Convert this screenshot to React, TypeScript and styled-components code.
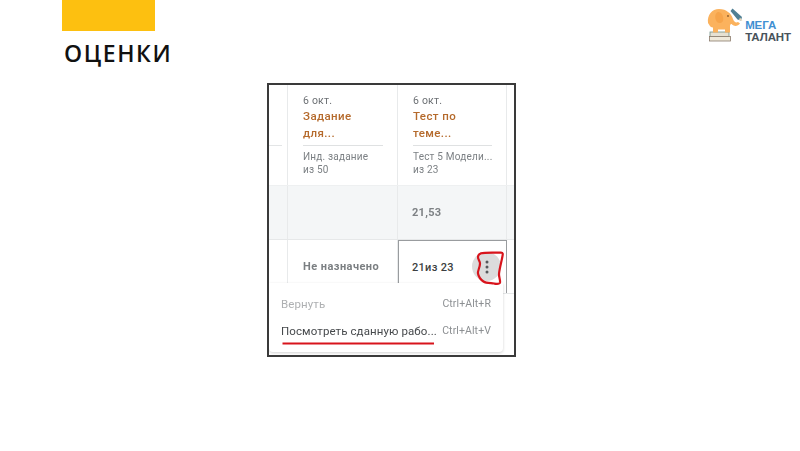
import React from "react"
import styled, {createGlobalStyle} from "styled-components"

const GlobalStyle = createGlobalStyle`
  html, body {
    margin: 0;
    padding: 0;
    background: #ffffff;
  }
  body {
    font-family: "Roboto", "Liberation Sans", sans-serif;
  }
`

const Page = styled.div`
  width: 800px;
  height: 451px;
  overflow: hidden;
  background: #ffffff;
  display: flex;
  flex-direction: column;
`

const Header = styled.header`
  height: 83px;
  flex: none;
  display: flex;
  justify-content: space-between;
  align-items: flex-start;
  padding: 0 9px 0 62px;
`

const TitleBlock = styled.div`
  display: flex;
  flex-direction: column;
`

const YellowBar = styled.div`
  width: 93px;
  height: 31px;
  background: #fdc010;
`

const Title = styled.h1`
  margin: 9px 0 0 2px;
  font-family: "Open Sans", "Liberation Sans", sans-serif;
  font-size: 23px;
  line-height: 26px;
  font-weight: 600;
  letter-spacing: 1.6px;
  color: #111111;
`

const LogoBox = styled.div`
  display: flex;
  align-items: flex-start;
  gap: 1px;
  margin-top: 8px;
`

const LogoText = styled.div`
  display: flex;
  flex-direction: column;
  margin-top: 11px;
  font-family: "Liberation Sans", sans-serif;
  font-size: 11.5px;
  line-height: 12px;
  font-weight: 700;
  letter-spacing: -0.1px;
`

const LogoWord = styled.span<{$color: string}>`
  color: ${p => p.$color};
`

const Shot = styled.figure`
  position: relative;
  margin: 0 0 0 267px;
  width: 249px;
  height: 274px;
  box-sizing: border-box;
  border: 2px solid #3a3a3a;
  overflow: hidden;
  background: #ffffff;
`

const Blurred = styled.div`
  height: 100%;
  filter: blur(0.4px);
`

const HeadRow = styled.div`
  height: 100px;
  display: grid;
  grid-template-columns: 19px 110px 109px 1fr;
  border-bottom: 1px solid #eef0f1;
`

const DataRow = styled.div<{$bg: string; $h: number}>`
  height: ${p => p.$h}px;
  display: grid;
  grid-template-columns: 19px 110px 109px 1fr;
  background: ${p => p.$bg};
  border-bottom: 1px solid #e6e8e9;
`

const Cell = styled.div<{$last?: boolean}>`
  box-sizing: border-box;
  border-right: ${p => (p.$last ? "none" : "1px solid #e8eaeb")};
  min-width: 0;
`

const EdgeCell = styled(Cell)`
  position: relative;
  &::after {
    content: "";
    position: absolute;
    left: 0;
    right: 5px;
    top: 60px;
    border-top: 1px solid #e3e5e6;
  }
`

const ColumnHead = styled(Cell)`
  padding: 10px 14px 0 15px;
`

const DateText = styled.div`
  font-size: 10.5px;
  line-height: 12px;
  letter-spacing: 0.2px;
  color: #6c7074;
`

const TaskName = styled.div`
  margin-top: 1px;
  font-size: 11.5px;
  line-height: 17px;
  font-weight: 500;
  letter-spacing: 0.4px;
  color: #b56a2c;
  padding-bottom: 3px;
  border-bottom: 1px solid #dfe1e2;
`

const TaskMeta = styled.div`
  margin-top: 4px;
  font-size: 10px;
  line-height: 13px;
  letter-spacing: 0.2px;
  color: #7c8084;
  white-space: nowrap;
`

const ValueCell = styled(Cell)`
  display: flex;
  align-items: center;
  padding-left: 14px;
  font-size: 11px;
  font-weight: 700;
  letter-spacing: 0.3px;
  color: #7d8184;
`

const UnsetCell = styled(ValueCell)`
  padding-left: 15px;
  letter-spacing: 0.45px;
  color: #7b7f82;
`

const SelectedCell = styled(ValueCell)`
  position: relative;
  padding-left: 13px;
  background: #ffffff;
  border: 1px solid #999c9f;
  border-bottom: none;
  justify-content: flex-start;
  color: #3c3f42;
  font-weight: 500;
`

const MoreButton = styled.div`
  position: absolute;
  right: 5px;
  top: 11px;
  width: 29px;
  height: 29px;
  border-radius: 50%;
  background: #dcdcdc;
  display: flex;
  align-items: center;
  justify-content: center;
  color: #55585b;
`

const Menu = styled.div`
  position: absolute;
  left: 0;
  top: 198px;
  width: 234px;
  height: 69px;
  box-sizing: border-box;
  padding: 7px 12px 0 12px;
  background: #ffffff;
  border-radius: 0 0 4px 4px;
  box-shadow: 0 1px 3px rgba(0, 0, 0, 0.18);
  display: flex;
  flex-direction: column;
`

const MenuRow = styled.div`
  height: 27px;
  display: flex;
  align-items: center;
  justify-content: space-between;
  white-space: nowrap;
`

const MenuLabel = styled.span<{$muted?: boolean}>`
  font-size: 11.5px;
  letter-spacing: 0.1px;
  color: ${p => (p.$muted ? "#aeb0b2" : "#46494c")};
`

const MenuKeys = styled.span`
  font-size: 10.5px;
  letter-spacing: 0.1px;
  color: #8d9093;
`

const MarkLayer = styled.svg`
  position: absolute;
  left: 0;
  top: 0;
  width: 100%;
  height: 100%;
  pointer-events: none;
`

function Logo(){
  return(
    <LogoBox>
      <svg width="37" height="34" viewBox="0 0 37 34">
        <rect x="3" y="24" width="19" height="4.500" fill="#e6e1d2" stroke="#6f8f86" strokeWidth="0.8"/>
        <rect x="2.500" y="28.500" width="21" height="4.500" fill="#efe9da" stroke="#8a7a6c" strokeWidth="0.8"/>
        <path d="M1 15C0 7 5 1 12 1c4 0 7 1 9 3 2 1 4 4 5 7 1 3 3 4 5 3l2 1.500c-2 3-6 3-8 1-1-1-2 0-2 2v6h-5v-3h-7v3H6v-5c-2 0-3-1-4-3z" fill="#fbb25d"/>
        <path d="M11 4c-3 1-4 6-1 10 2 2 5 1 6-1 1-4-1-9-5-9z" fill="#f6a44a"/>
        <circle cx="21" cy="8" r="0.900" fill="#8a5a2b"/>
        <path d="M23.500 3l2-2.500 9.500 8.500-1 3.500-3.500-1z" fill="#4f7f94"/>
        <path d="M33 9.500l2.500 3.500-3.500-1z" fill="#e9d7b8"/>
      </svg>
      <LogoText>
        <LogoWord $color="#3f8fd2">МЕГА</LogoWord>
        <LogoWord $color="#48535b">ТАЛАНТ</LogoWord>
      </LogoText>
    </LogoBox>
  )
}

function App(){
  return(
    <Page>
      <GlobalStyle/>
      <Header>
        <TitleBlock>
          <YellowBar/>
          <Title>ОЦЕНКИ</Title>
        </TitleBlock>
        <Logo/>
      </Header>
      <Shot>
        <Blurred>
          <HeadRow>
            <EdgeCell/>
            <ColumnHead>
              <DateText>6 окт.</DateText>
              <TaskName>Задание<br/>для...</TaskName>
              <TaskMeta>Инд. задание<br/>из 50</TaskMeta>
            </ColumnHead>
            <ColumnHead>
              <DateText>6 окт.</DateText>
              <TaskName>Тест по<br/>теме...</TaskName>
              <TaskMeta>Тест 5 Модели...<br/>из 23</TaskMeta>
            </ColumnHead>
            <Cell $last/>
          </HeadRow>
          <DataRow $bg="#f4f6f7" $h={53}>
            <Cell/>
            <Cell/>
            <ValueCell>21,53</ValueCell>
            <Cell $last/>
          </DataRow>
          <DataRow $bg="#ffffff" $h={53}>
            <Cell/>
            <UnsetCell>Не назначено</UnsetCell>
            <SelectedCell>
              21из 23
              <MoreButton>
                <svg width="4" height="14" viewBox="0 0 4 14" fill="currentColor">
                  <circle cx="2" cy="2" r="1.500"/>
                  <circle cx="2" cy="7" r="1.500"/>
                  <circle cx="2" cy="12" r="1.500"/>
                </svg>
              </MoreButton>
            </SelectedCell>
            <Cell $last/>
          </DataRow>
          <Menu>
            <MenuRow>
              <MenuLabel $muted>Вернуть</MenuLabel>
              <MenuKeys>Ctrl+Alt+R</MenuKeys>
            </MenuRow>
            <MenuRow>
              <MenuLabel>Посмотреть сданную рабо...</MenuLabel>
              <MenuKeys>Ctrl+Alt+V</MenuKeys>
            </MenuRow>
          </Menu>
        </Blurred>
        <MarkLayer viewBox="0 0 245 270">
          <path d="M211 168.500c7-1.500 15-.5 21-1 2 0 2 1.500 1.500 3.500-1 6-3 12-3.500 18-.2 3 1.500 6 1 8.500-.5 2-3 1.500-6 1-4-.5-8-.3-10.500-2-3-2-5-5-5.500-8-.5-3 2-6 2-10 0-2.500-2.500-4.500-2-7 .3-1.500 1.500-2.700 3-3z" fill="none" stroke="#d8141c" strokeWidth="2.200"/>
          <path d="M13.500 258.500H165" fill="none" stroke="#d8141c" strokeWidth="2.200"/>
        </MarkLayer>
      </Shot>
    </Page>
  )
}

export default App
